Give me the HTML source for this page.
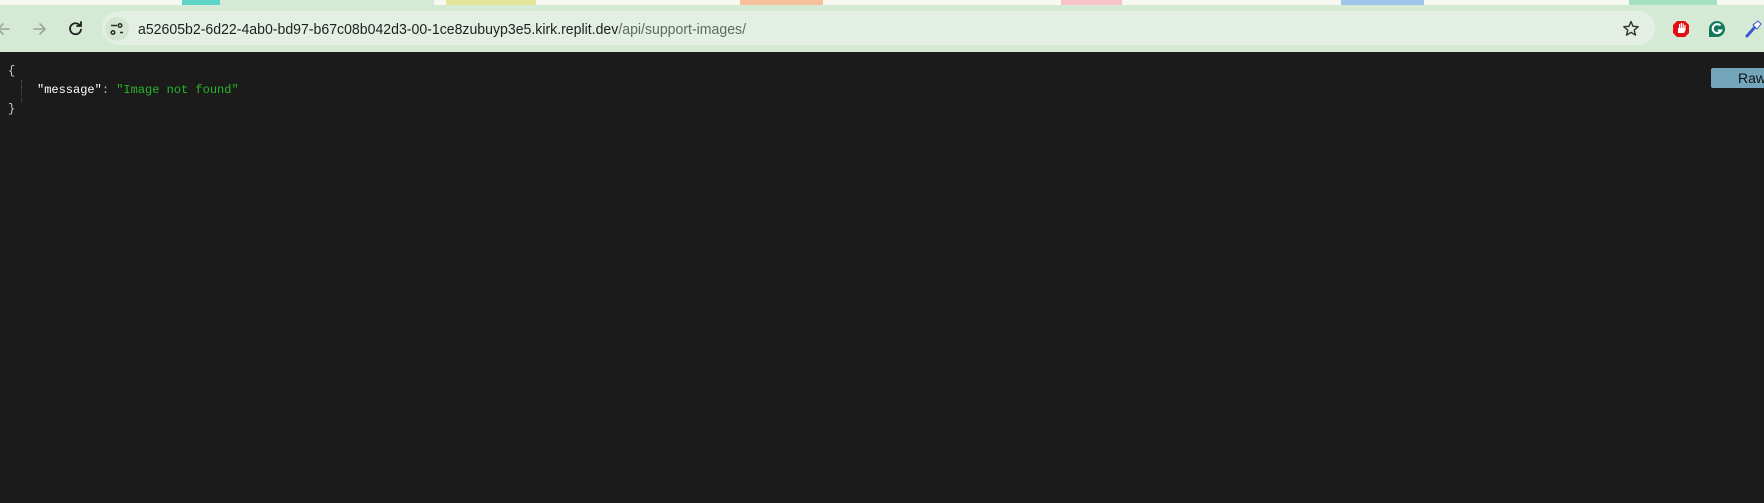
<!DOCTYPE html>
<html><head><meta charset="utf-8"><style>
html,body{margin:0;padding:0;width:1764px;height:503px;overflow:hidden;background:#1b1b1b;}
.top{position:absolute;left:0;top:0;width:1764px;height:5px;background:#f7f8f0;}
.tb{position:absolute;left:0;top:5px;width:1764px;height:47px;background:#d5ead5;}
.omni{position:absolute;left:102px;top:11px;width:1553px;height:34px;border-radius:17px;background:#e4efe3;}
.b{position:absolute;height:5px;top:0;}
.mono{position:absolute;font-family:"Liberation Mono",monospace;font-size:12px;line-height:14px;white-space:pre;}
</style></head><body>
<div class="top"></div>
<div class="b" style="left:182px;width:38px;background:#5fd3c8"></div>
<div class="b" style="left:220px;width:214px;background:#d5ead5"></div>
<div class="b" style="left:446px;width:90px;background:#e4e49a"></div>
<div class="b" style="left:740px;width:83px;background:#f6c09a"></div>
<div class="b" style="left:1061px;width:61px;background:#f7c3c8"></div>
<div class="b" style="left:1341px;width:83px;background:#9ec6ea"></div>
<div class="b" style="left:1629px;width:88px;background:#a6e0c2"></div>
<div class="tb"></div>
<div class="omni"></div>
<svg style="position:absolute;left:0;top:0" width="1764" height="52">
 <g fill="none" stroke="#9aa59a" stroke-width="1.6" stroke-linecap="round" stroke-linejoin="round">
  <path d="M9 29H-2M3 24l-5 5 5 5"/>
  <path d="M34 29h11M40 24l5 5-5 5"/>
 </g>
 <g fill="none" stroke="#1f1f1f" stroke-width="1.8" stroke-linecap="round">
  <path d="M80 25.5a5.5 5.5 0 1 0 1 4"/>
  <path d="M81 22v4h-4"/>
 </g>
 <circle cx="117" cy="29" r="12" fill="#d3e6d2"/>
 <g stroke="#2a2a2a" stroke-width="1.5" fill="none">
  <path d="M111 25.5h6M120 32.5h3"/><circle cx="120" cy="25.5" r="1.8"/><circle cx="113" cy="32.5" r="1.8"/>
 </g>
 <text x="138" y="34" font-family="Liberation Sans,sans-serif" font-size="14.5" textLength="608" lengthAdjust="spacingAndGlyphs"><tspan fill="#1f1f1f">a52605b2-6d22-4ab0-bd97-b67c08b042d3-00-1ce8zubuyp3e5.kirk.replit.dev</tspan><tspan fill="#5f6a5f">/api/support-images/</tspan></text>
 <path d="M1631 21.5l2 4.8 5.2.4-4 3.4 1.3 5-4.5-2.8-4.5 2.8 1.3-5-4-3.4 5.2-.4z" fill="none" stroke="#333" stroke-width="1.4" stroke-linejoin="round"/>
 <polygon points="1677,21 1685,21 1689,25 1689,33 1685,37 1677,37 1673,33 1673,25" fill="#e30e13"/>
 <path d="M1678 33v-5h1v-4h1.2v4h.6v-5h1.2v5h.6v-4.5h1.2v4.5h.6v-3h1.2v5l-1.5 3z" fill="#fff"/>
 <circle cx="1717" cy="29" r="8" fill="#12795f"/>
 <path d="M1709 29v8h8z" fill="#12795f"/>
 <path d="M1720.5 25.5a4.5 4.5 0 1 0 .8 5h-3.5" fill="none" stroke="#fff" stroke-width="2"/>
 <path d="M1747 36l8-9" stroke="#3a5bd0" stroke-width="3" stroke-linecap="round"/>
 <path d="M1753 25l5-4 3 3-4 5z" fill="#fff" stroke="#3a5bd0" stroke-width="1"/>
</svg>
<div class="mono" style="left:8px;top:64px;color:#c8c8c8">{</div>
<div style="position:absolute;left:21px;top:80px;height:22px;border-left:1px dotted #555"></div>
<div class="mono" style="left:37px;top:83px"><span style="color:#fff">"message"</span><span style="color:#bbb">: </span><span style="color:#2ab52a">"Image not found"</span></div>
<div class="mono" style="left:8px;top:102px;color:#c8c8c8">}</div>
<div style="position:absolute;left:1711px;top:68px;width:60px;height:20px;background:#74a6bb;border-radius:2px;font-family:'Liberation Sans',sans-serif;font-size:14px;line-height:20px;color:#111;padding-left:27px;box-sizing:border-box">Raw</div>
</body></html>
